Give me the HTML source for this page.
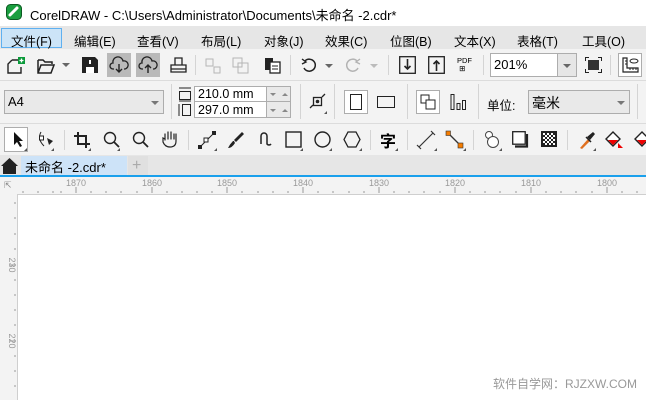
<!DOCTYPE html>
<html><head><meta charset="utf-8"><style>
*{margin:0;padding:0;box-sizing:border-box}
body{width:646px;height:400px;overflow:hidden;background:#fff;font-family:"Liberation Sans","Noto Sans CJK SC",sans-serif;position:relative;color:#000}
.a{position:absolute}
.t{font-size:12.5px;white-space:nowrap}
.m{font-size:12.5px;top:31px}
svg{position:absolute;overflow:visible}
.sep{position:absolute;width:1px;background:#d4d4d4}
.tri{position:absolute;width:0;height:0;border-left:3px solid transparent;border-bottom:3px solid #555}
</style></head><body>
<div class="a" style="left:0;top:0;width:646px;height:26px;background:#fff"></div>
<svg style="left:6px;top:4px" width="16" height="16"><rect x="0.5" y="0.5" width="15" height="15" rx="4" fill="#1a9e3f" stroke="#0c5a22"/><path d="M4 11 L11 4" stroke="#fff" stroke-width="3" stroke-linecap="round"/></svg>
<div class="a t" style="left:30px;top:5px;font-size:13px">CorelDRAW - C:\Users\Administrator\Documents\未命名 -2.cdr*</div>
<div class="a" style="left:0;top:26px;width:646px;height:23px;background:#e6e6e6"></div>
<div class="a" style="left:1px;top:28px;width:61px;height:20px;background:#cce4f7;border:1px solid #5fb0f0"></div>
<div class="a t m" style="left:11px">文件(F)</div>
<div class="a t m" style="left:74px">编辑(E)</div>
<div class="a t m" style="left:137px">查看(V)</div>
<div class="a t m" style="left:201px">布局(L)</div>
<div class="a t m" style="left:264px">对象(J)</div>
<div class="a t m" style="left:325px">效果(C)</div>
<div class="a t m" style="left:390px">位图(B)</div>
<div class="a t m" style="left:454px">文本(X)</div>
<div class="a t m" style="left:517px">表格(T)</div>
<div class="a t m" style="left:582px">工具(O)</div>
<div class="a" style="left:0;top:49px;width:646px;height:126px;background:#f3f3f3"></div>
<div class="a" style="left:0;top:80px;width:646px;height:1px;background:#dcdcdc"></div>
<div class="a" style="left:0;top:123px;width:646px;height:1px;background:#dcdcdc"></div>
<div class="a" style="left:0;top:155px;width:646px;height:20px;background:#e6e6e6"></div>
<svg style="left:7px;top:56px" width="18" height="18"><path d="M5 4 H11 M5 4 L1 8 V17 H14 V11" fill="none" stroke="#222" stroke-width="1.4"/><rect x="11" y="1" width="7" height="7" fill="#0a9a3a"/><path d="M14.5 2.5v4M12.5 4.5h4" stroke="#fff" stroke-width="1.3"/></svg>
<svg style="left:37px;top:58px" width="18" height="16"><path d="M1 2 H6 L8 4 H15 V6 M1 2 V15 H14 L17 7 H4 L1 15" fill="none" stroke="#222" stroke-width="1.5"/></svg>
<div class="a" style="left:62px;top:63px;border-left:4px solid transparent;border-right:4px solid transparent;border-top:4px solid #666"></div>
<svg style="left:82px;top:57px" width="16" height="16"><path d="M0 0 H13 L16 3 V16 H0Z" fill="#222"/><rect x="7" y="3" width="2" height="4" fill="#fff"/><rect x="4" y="10" width="8" height="6" fill="#fff"/></svg>
<div class="a" style="left:107px;top:53px;width:24px;height:24px;background:#b9b9b9"></div>
<svg style="left:110px;top:57px" width="18" height="16"><path d="M4 12 H3 A3 3 0 0 1 3 6 A5 5 0 0 1 13 4 A4 4 0 0 1 15 12 H14" fill="none" stroke="#222" stroke-width="1.3"/><path d="M9 7 V15 M6 12 L9 15 L12 12" fill="none" stroke="#222" stroke-width="1.4"/></svg>
<div class="a" style="left:136px;top:53px;width:24px;height:24px;background:#b9b9b9"></div>
<svg style="left:139px;top:57px" width="18" height="16"><path d="M4 12 H3 A3 3 0 0 1 3 6 A5 5 0 0 1 13 4 A4 4 0 0 1 15 12 H14" fill="none" stroke="#222" stroke-width="1.3"/><path d="M9 16 V8 M6 11 L9 8 L12 11" fill="none" stroke="#222" stroke-width="1.4"/></svg>
<svg style="left:170px;top:57px" width="17" height="16"><path d="M5 8 V1 H12 V8 M1 8 H16 V15 H1Z M1 12 H16" fill="none" stroke="#222" stroke-width="1.3"/></svg>
<div class="sep" style="left:195px;top:55px;height:20px"></div>
<svg style="left:205px;top:58px" width="16" height="16" opacity=".35"><path d="M1 1 H8 V8 H1Z M9 9 H15 V15 H9Z" fill="none" stroke="#444"/></svg>
<svg style="left:232px;top:57px" width="18" height="17" opacity=".35"><path d="M1 1 H10 V10 H1Z M6 6 H16 V16 H6Z" fill="#f3f3f3" stroke="#444"/></svg>
<svg style="left:264px;top:57px" width="18" height="17"><rect x="1" y="1" width="8" height="12" fill="#222"/><rect x="6" y="5" width="10" height="11" fill="#fff" stroke="#222" stroke-width="1.3"/><path d="M8 9h6M8 12h6" stroke="#222"/></svg>
<div class="sep" style="left:290px;top:55px;height:20px"></div>
<svg style="left:301px;top:57px" width="16" height="16"><path d="M4 4 A6 6 0 1 1 3 11" fill="none" stroke="#222" stroke-width="1.5"/><path d="M1 2 L5 5 L1 7" fill="none" stroke="#222" stroke-width="1.4"/></svg>
<div class="a" style="left:325px;top:64px;border-left:4px solid transparent;border-right:4px solid transparent;border-top:4px solid #666"></div>
<svg style="left:345px;top:57px" width="16" height="16" opacity=".3"><path d="M12 4 A6 6 0 1 0 13 11" fill="none" stroke="#222" stroke-width="1.5"/><path d="M15 2 L11 5 L15 7" fill="none" stroke="#222" stroke-width="1.4"/></svg>
<div class="a" style="left:370px;top:64px;border-left:4px solid transparent;border-right:4px solid transparent;border-top:4px solid #bbb"></div>
<div class="sep" style="left:388px;top:55px;height:20px"></div>
<svg style="left:399px;top:56px" width="17" height="18"><rect x="0.7" y="0.7" width="15.6" height="16.6" fill="none" stroke="#222" stroke-width="1.3"/><path d="M8.5 3 V13 M5.5 10 L8.5 13 L11.5 10" fill="none" stroke="#222" stroke-width="1.6"/></svg>
<svg style="left:428px;top:56px" width="17" height="18"><rect x="0.7" y="0.7" width="15.6" height="16.6" fill="none" stroke="#222" stroke-width="1.3"/><path d="M8.5 15 V5 M5.5 8 L8.5 5 L11.5 8" fill="none" stroke="#222" stroke-width="1.6"/></svg>
<div class="a" style="left:457px;top:57px;font-size:7.5px;line-height:8px">PDF<br>&nbsp;⊞</div>
<div class="sep" style="left:483px;top:55px;height:20px"></div>
<div class="a" style="left:490px;top:53px;width:87px;height:24px;background:#fff;border:1px solid #adadad"></div>
<div class="a" style="left:557px;top:54px;width:19px;height:22px;background:#e6e6e6;border-left:1px solid #adadad"></div>
<div class="a" style="left:563px;top:64px;border-left:4px solid transparent;border-right:4px solid transparent;border-top:4px solid #666"></div>
<div class="a t" style="left:494px;top:57px;font-size:13px">201%</div>
<svg style="left:585px;top:57px" width="17" height="16"><path d="M0.5 4 V0.5 H4 M13 0.5 H16.5 V4 M16.5 12 V15.5 H13 M4 15.5 H0.5 V12" fill="none" stroke="#222"/><rect x="3" y="3" width="11" height="10" fill="#333"/></svg>
<div class="sep" style="left:610px;top:55px;height:20px"></div>
<div class="a" style="left:618px;top:53px;width:24px;height:24px;background:#fff;border:1px solid #adadad"></div>
<svg style="left:622px;top:57px" width="17" height="16"><path d="M1 1 V15 H16 V11 H5 V1Z" fill="none" stroke="#222" stroke-width="1.2"/><path d="M3 4h2M3 7h2M8 11v2M11 11v2M14 11v2" stroke="#222"/><ellipse cx="12" cy="4" rx="4" ry="2" fill="none" stroke="#222"/></svg>
<div class="a" style="left:4px;top:90px;width:160px;height:24px;background:#e9e9e9;border:1px solid #adadad"></div>
<div class="a t" style="left:8px;top:94px;font-size:13px">A4</div>
<div class="a" style="left:151px;top:101px;border-left:4px solid transparent;border-right:4px solid transparent;border-top:4px solid #777"></div>
<div class="sep" style="left:171px;top:84px;height:35px"></div>
<svg style="left:178px;top:87px" width="14" height="30"><path d="M1 1h12M1 14h12" stroke="#222"/><rect x="1.5" y="4.5" width="11" height="8" fill="none" stroke="#222"/><path d="M1 17v12" stroke="#222"/><rect x="4.5" y="17.5" width="8" height="11" fill="none" stroke="#222"/></svg>
<div class="a" style="left:194px;top:86px;width:97px;height:32px;background:#fff;border:1px solid #adadad"></div>
<div class="a" style="left:195px;top:101px;width:95px;height:1px;background:#adadad"></div>
<div class="a" style="left:266px;top:87px;width:24px;height:30px;background:#e9e9e9;border-left:1px solid #adadad"></div>
<div class="a" style="left:266px;top:101px;width:24px;height:1px;background:#adadad"></div>
<div class="a t" style="left:198px;top:87px;font-size:12.5px">210.0 mm</div>
<div class="a t" style="left:198px;top:103px;font-size:12.5px">297.0 mm</div>
<div class="a" style="left:270px;top:93px;border-left:3px solid transparent;border-right:3px solid transparent;border-top:3px solid #888"></div>
<div class="a" style="left:282px;top:93px;border-left:3px solid transparent;border-right:3px solid transparent;border-bottom:3px solid #888"></div>
<div class="a" style="left:270px;top:109px;border-left:3px solid transparent;border-right:3px solid transparent;border-top:3px solid #888"></div>
<div class="a" style="left:282px;top:109px;border-left:3px solid transparent;border-right:3px solid transparent;border-bottom:3px solid #888"></div>
<div class="sep" style="left:300px;top:84px;height:35px"></div>
<svg style="left:309px;top:93px" width="18" height="18"><rect x="4.5" y="4.5" width="8" height="8" fill="none" stroke="#222" stroke-width="1.3"/><circle cx="8.5" cy="8.5" r="1.8" fill="#222"/><path d="M1 15 L4 12 M13 4 L16 1" stroke="#222" stroke-width="1.3"/></svg>
<div class="tri" style="left:324px;top:111px"></div>
<div class="sep" style="left:334px;top:84px;height:35px"></div>
<div class="a" style="left:344px;top:90px;width:24px;height:24px;background:#fff;border:1px solid #adadad"></div>
<div class="a" style="left:350px;top:94px;width:12px;height:16px;border:1.3px solid #222"></div>
<div class="a" style="left:377px;top:96px;width:18px;height:12px;border:1.3px solid #222"></div>
<div class="sep" style="left:407px;top:84px;height:35px"></div>
<div class="a" style="left:416px;top:90px;width:24px;height:24px;background:#fff;border:1px solid #adadad"></div>
<svg style="left:420px;top:94px" width="16" height="16"><rect x="1" y="1" width="8" height="8" fill="none" stroke="#222"/><rect x="6" y="6" width="9" height="9" fill="#fff" stroke="#222"/></svg>
<svg style="left:450px;top:94px" width="16" height="16"><rect x="1" y="0.5" width="3" height="15" fill="none" stroke="#222"/><rect x="7" y="9.5" width="3" height="6" fill="none" stroke="#222"/><rect x="12.5" y="6.5" width="3" height="9" fill="none" stroke="#222"/></svg>
<div class="sep" style="left:478px;top:84px;height:35px"></div>
<div class="a t" style="left:487px;top:95px;font-size:12.5px">单位:</div>
<div class="a" style="left:528px;top:90px;width:102px;height:24px;background:#e9e9e9;border:1px solid #adadad"></div>
<div class="a t" style="left:532px;top:93px;font-size:14px">毫米</div>
<div class="a" style="left:617px;top:101px;border-left:4px solid transparent;border-right:4px solid transparent;border-top:4px solid #777"></div>
<div class="sep" style="left:637px;top:84px;height:35px"></div>
<div class="a" style="left:4px;top:127px;width:24px;height:25px;background:#fff;border:1px solid #adadad"></div>
<svg style="left:13px;top:131px" width="10" height="16"><path d="M1 1 V14 L4 11 L7 16 L9 15 L6 10 H10Z" fill="#111"/></svg>
<div class="tri" style="left:24px;top:148px"></div>
<svg style="left:38px;top:131px" width="18" height="18"><path d="M3 1 Q-1 8 6 15" fill="none" stroke="#222"/><rect x="1.5" y="5" width="4" height="4" fill="#fff" stroke="#222"/><path d="M9 7 L15 10 L11 14Z" fill="#222"/></svg>
<div class="tri" style="left:51px;top:148px"></div>
<div class="sep" style="left:64px;top:130px;height:20px"></div>
<svg style="left:74px;top:132px" width="16" height="16"><path d="M4 0 V12 H16 M0 4 H12 V16" fill="none" stroke="#222" stroke-width="2"/></svg>
<div class="tri" style="left:88px;top:148px"></div>
<svg style="left:103px;top:131px" width="18" height="18"><circle cx="7" cy="7" r="5.5" fill="none" stroke="#222" stroke-width="1.4"/><path d="M11 11 L16 16" stroke="#222" stroke-width="1.8"/></svg>
<div class="tri" style="left:117px;top:148px"></div>
<svg style="left:132px;top:131px" width="18" height="18"><circle cx="7" cy="7" r="5.5" fill="none" stroke="#222" stroke-width="1.4"/><path d="M11 11 L16 16" stroke="#222" stroke-width="1.8"/></svg>
<svg style="left:161px;top:130px" width="17" height="18"><path d="M4 10 V4 M7 9 V2 M10 9 V2 M13 9 V4 M4 9 L2 8 V12 Q4 17 9 17 Q15 17 15 11 V4" fill="none" stroke="#222" stroke-width="1.2" stroke-linecap="round"/></svg>
<div class="sep" style="left:188px;top:130px;height:20px"></div>
<svg style="left:198px;top:131px" width="18" height="18"><path d="M2 16 L16 2" stroke="#222"/><rect x="0" y="14" width="4" height="4" fill="#222"/><rect x="14" y="0" width="4" height="4" fill="#222"/><rect x="6" y="7" width="4" height="4" fill="#fff" stroke="#222"/></svg>
<div class="tri" style="left:214px;top:148px"></div>
<svg style="left:227px;top:131px" width="18" height="18"><path d="M15 1 L17 3 L9 11 L7 9Z" fill="#222"/><path d="M7 10 L8 12 Q5 17 1 17 Q3 13 6 10Z" fill="#222"/></svg>
<svg style="left:256px;top:131px" width="16" height="18"><path d="M5 13 V5 A3 3 0 0 1 11 5 V13 A2.5 2.5 0 0 0 15 13" fill="none" stroke="#222" stroke-width="1.5"/></svg>
<svg style="left:285px;top:131px" width="17" height="17"><rect x="1" y="1" width="15" height="15" fill="none" stroke="#222" stroke-width="1.4"/></svg>
<div class="tri" style="left:300px;top:148px"></div>
<svg style="left:314px;top:131px" width="17" height="17"><circle cx="8.5" cy="8.5" r="7.5" fill="none" stroke="#222" stroke-width="1.4"/></svg>
<div class="tri" style="left:329px;top:148px"></div>
<svg style="left:343px;top:131px" width="18" height="17"><path d="M5 1 H13 L17 8.5 L13 16 H5 L1 8.5Z" fill="none" stroke="#222" stroke-width="1.3"/></svg>
<div class="tri" style="left:359px;top:148px"></div>
<div class="sep" style="left:370px;top:130px;height:20px"></div>
<div class="a" style="left:380px;top:128px;font-size:16px;font-weight:bold;font-family:'Noto Sans CJK SC',sans-serif">字</div>
<div class="tri" style="left:395px;top:148px"></div>
<div class="sep" style="left:407px;top:130px;height:20px"></div>
<svg style="left:417px;top:131px" width="18" height="18"><path d="M2 16 L16 2 M0 14 L4 18 M14 0 L18 4" stroke="#333" stroke-width="1.2"/></svg>
<div class="tri" style="left:434px;top:148px"></div>
<svg style="left:446px;top:131px" width="18" height="18"><path d="M2 2 L15 15" stroke="#333" stroke-width="1.3"/><rect x="0" y="0" width="4.5" height="4.5" fill="#f57c00" stroke="#333" stroke-width=".6"/><rect x="12" y="12" width="5" height="5" fill="#f57c00" stroke="#333" stroke-width=".6"/></svg>
<div class="tri" style="left:463px;top:148px"></div>
<div class="sep" style="left:473px;top:130px;height:20px"></div>
<svg style="left:483px;top:131px" width="18" height="18"><circle cx="6" cy="4" r="3.5" fill="#fff" stroke="#444"/><circle cx="10" cy="11" r="5.5" fill="#fff" stroke="#444"/></svg>
<div class="tri" style="left:499px;top:148px"></div>
<svg style="left:512px;top:131px" width="17" height="17"><rect x="0.7" y="0.7" width="12.5" height="12.5" fill="#fff" stroke="#222" stroke-width="1.3"/><path d="M15 3 V15.5 H3" fill="none" stroke="#222" stroke-width="2.2"/></svg>
<svg style="left:541px;top:131px" width="16" height="16"><rect width="16" height="16" fill="#222"/><path d="M2 2h2v2h-2zM6 2h2v2h-2zM10 2h2v2h-2zM4 4h2v2h-2zM8 4h2v2h-2zM12 4h2v2h-2zM2 6h2v2h-2zM6 6h2v2h-2zM10 6h2v2h-2zM4 8h2v2h-2zM8 8h2v2h-2zM12 8h2v2h-2zM2 10h2v2h-2zM6 10h2v2h-2zM10 10h2v2h-2zM4 12h2v2h-2zM8 12h2v2h-2zM12 12h2v2h-2z" fill="#fff"/></svg>
<div class="sep" style="left:567px;top:130px;height:20px"></div>
<svg style="left:578px;top:131px" width="17" height="18"><path d="M2 17 L10 8 L12 10 L4 18Z" fill="#e07020"/><path d="M9 6 L15 1 L17 3 L12 9Z" fill="#222"/><path d="M8 6 L13 11" stroke="#222" stroke-width="1.5"/></svg>
<div class="tri" style="left:593px;top:148px"></div>
<svg style="left:605px;top:131px" width="20" height="18"><path d="M8 1 L15 8 L8 15 L1 8Z" fill="#fff" stroke="#222" stroke-width="1.4"/><path d="M3 9 H13 L8 14Z" fill="#e00"/><path d="M13 12 L18 17 H13Z" fill="#e00"/></svg>
<svg style="left:634px;top:131px" width="20" height="18"><path d="M8 1 L15 8 L8 15 L1 8Z" fill="#fff" stroke="#222" stroke-width="1.4"/><path d="M3 9 H13 L8 14Z" fill="#e00"/></svg>
<svg style="left:1px;top:158px" width="17" height="16"><path d="M0 8 L8.5 0 L17 8 H15 V16 H2 V8Z" fill="#222"/></svg>
<div class="a" style="left:21px;top:156px;width:106px;height:19px;background:#cde3f8"></div>
<div class="a t" style="left:25px;top:157px;font-size:13px">未命名 -2.cdr*</div>
<div class="a" style="left:128px;top:156px;width:20px;height:19px;background:#e0e0e0"></div>
<div class="a" style="left:132px;top:160px;font-size:16px;color:#aaa;line-height:12px">+</div>
<div class="a" style="left:0;top:175px;width:646px;height:2px;background:#1aa0ec"></div>
<div class="a" style="left:0;top:177px;width:646px;height:18px;background:#f3f3f3"></div>
<div class="a" style="left:0;top:177px;width:18px;height:223px;background:#f3f3f3"></div>
<div class="a" style="left:17px;top:194px;width:629px;height:1px;background:#cfcfcf"></div>
<div class="a" style="left:17px;top:194px;width:1px;height:206px;background:#cfcfcf"></div>
<div class="a" style="left:4px;top:180px;font-size:9px;color:#888">⇱</div>
<svg style="left:0;top:177px" width="646" height="223">
<g fill="#999" font-size="9" font-family="Liberation Sans" text-anchor="middle">
<text x="76" y="9">1870</text><text x="152" y="9">1860</text><text x="227" y="9">1850</text><text x="303" y="9">1840</text><text x="379" y="9">1830</text><text x="455" y="9">1820</text><text x="531" y="9">1810</text><text x="607" y="9">1800</text>
</g>
<g stroke="#999" stroke-width="1">
<path d="M76 10v6M152 10v6M227 10v6M303 10v6M379 10v6M455 10v6M531 10v6M607 10v6"/>
<path d="M23 14v2M38 14v2M53 14v2M61 14v2M91 14v2M106 14v2M121 14v2M137 14v2M167 14v2M182 14v2M197 14v2M212 14v2M242 14v2M258 14v2M273 14v2M288 14v2M318 14v2M333 14v2M349 14v2M364 14v2M394 14v2M409 14v2M424 14v2M440 14v2M470 14v2M485 14v2M500 14v2M516 14v2M546 14v2M561 14v2M576 14v2M592 14v2M622 14v2M637 14v2"/>
<path d="M10 88h6M10 164h6M14 26h2M14 41h2M14 57h2M14 72h2M14 103h2M14 118h2M14 133h2M14 148h2M14 179h2M14 194h2M14 209h2"/>
</g>
<g fill="#999" font-size="9" font-family="Liberation Sans" text-anchor="middle">
<text transform="translate(9,88) rotate(90)">230</text>
<text transform="translate(9,164) rotate(90)">220</text>
</g>
</svg>
<div class="a t" style="left:493px;top:375px;font-size:12px;color:#999">软件自学网：RJZXW.COM</div>
</body></html>
